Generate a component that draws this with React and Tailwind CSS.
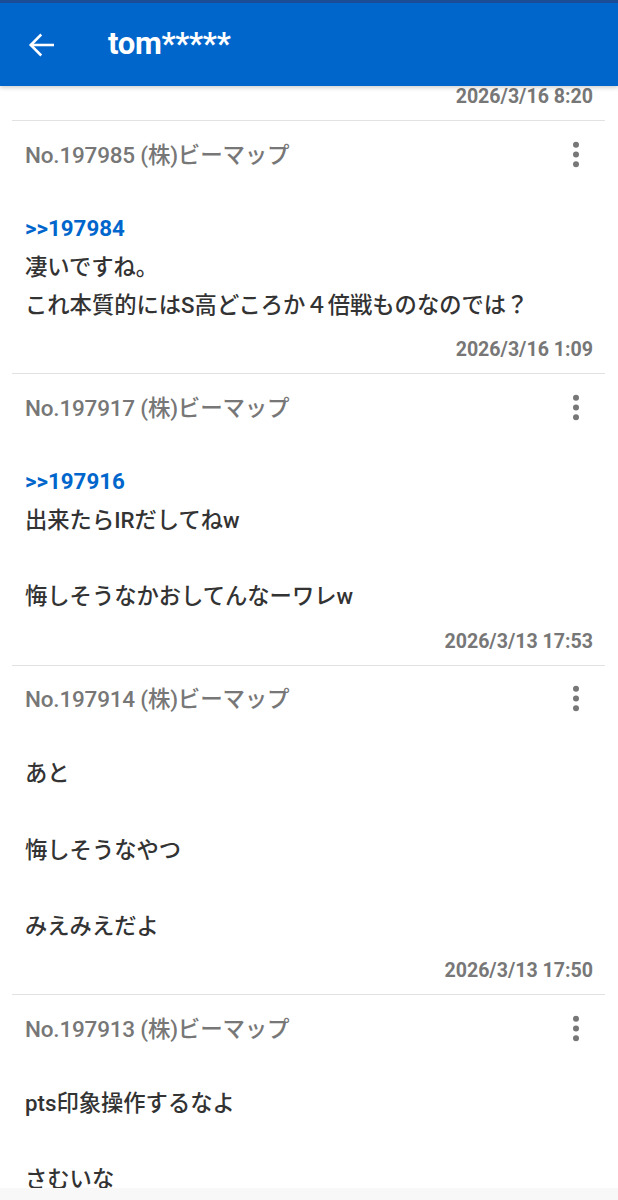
import React from 'react'

const posts = [
  {
    no: '197985',
    reply: '197984',
    lines: ['凄いですね。', 'これ本質的にはS高どころか４倍戦ものなのでは？'],
    date: '2026/3/16 1:09',
  },
  {
    no: '197917',
    reply: '197916',
    lines: ['出来たらIRだしてねw', '', '悔しそうなかおしてんなーワレw'],
    date: '2026/3/13 17:53',
  },
  {
    no: '197914',
    lines: ['あと', '', '悔しそうなやつ', '', 'みえみえだよ'],
    date: '2026/3/13 17:50',
  },
  {
    no: '197913',
    lines: ['pts印象操作するなよ', '', 'さむいな', '', 'ふつうに'],
    date: '2026/3/13 17:41',
  },
]

function DateRow({ date, className = '' }) {
  return (
    <div className={`flex justify-end pr-3 h-[30px] leading-[30px] text-[19.6px] font-bold text-[#777] mb-2 ${className}`}>
      {date}
    </div>
  )
}

function Post({ post }) {
  return (
    <div className="border-t border-[#e2e2e2]">
      <div className="flex items-center justify-between pl-[13px] pr-[11px] pt-[19px] h-[50px] box-border">
        <span className="text-[22.5px] font-medium text-[#777] tracking-[-0.2px]">
          No.{post.no} (株)ビーマップ
        </span>
        <svg width="36" height="36" viewBox="0 0 24 24" fill="#777">
          <circle cx="12" cy="4.5" r="2" />
          <circle cx="12" cy="11" r="2" />
          <circle cx="12" cy="17.5" r="2" />
        </svg>
      </div>
      <div className="pl-[13px] text-[22.3px] leading-[38.3px] font-medium text-[#333]">
        <div className="h-[38.3px]" />
        {post.reply && <div className="text-[#0066cc] font-bold">&gt;&gt;{post.reply}</div>}
        {post.lines.map((line, i) =>
          line ? <div key={i}>{line}</div> : <div key={i} className="h-[38.3px]" />
        )}
      </div>
      <DateRow date={post.date} className="mt-[11px]" />
    </div>
  )
}

export default function App() {
  return (
    <div
      className="relative h-[1200px] overflow-hidden bg-white"
      style={{ fontFamily: 'Roboto, "Noto Sans CJK JP", sans-serif' }}
    >
      <div className="h-[3px] bg-[#1c4e98]" />
      <div className="relative z-10 h-[83px] bg-[#0066cc] flex items-center shadow-[0_2px_4px_rgba(0,0,0,0.18)]">
        <svg className="ml-6" width="36" height="36" viewBox="0 0 24 24" fill="none" stroke="white" strokeWidth="1.7">
          <path d="M20 12H4.5" />
          <path d="M11.5 5L4.5 12l7 7" />
        </svg>
        <span className="ml-[48px] text-[31px] font-bold text-white tracking-[-0.3px]">tom*****</span>
      </div>
      <div className="ml-3 mr-[13px]">
        <DateRow date="2026/3/16 8:20" className="mt-[-4px]" />
        {posts.map((p) => (
          <Post key={p.no} post={p} />
        ))}
      </div>
      <div className="absolute bottom-0 left-0 right-0 h-[12px] bg-[#f8f8f8]" />
    </div>
  )
}
